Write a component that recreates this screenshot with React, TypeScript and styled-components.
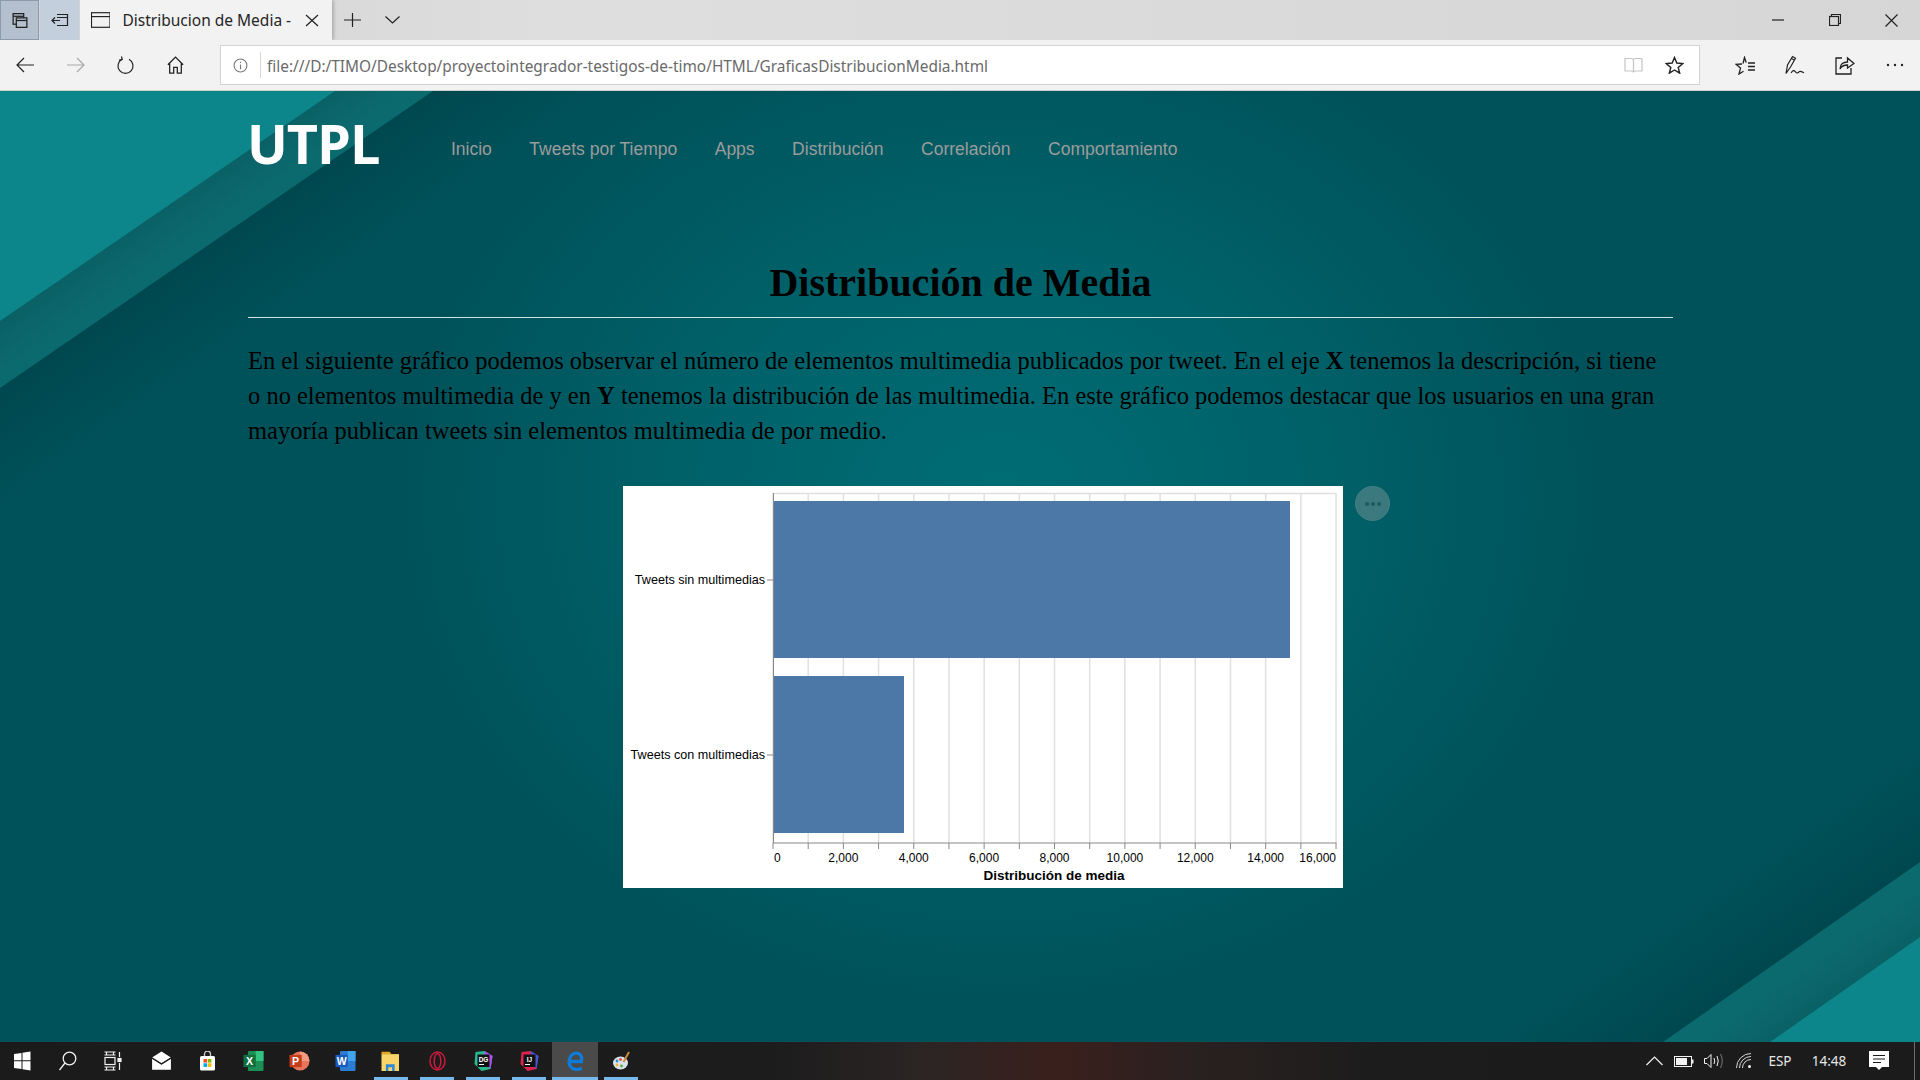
import React from 'react';
import styled, { createGlobalStyle } from 'styled-components';

const GlobalStyle = createGlobalStyle`
  html, body {
    margin: 0;
    padding: 0;
    height: 100%;
    overflow: hidden;
  }
  #root {
    height: 100%;
  }
`;

const Screen = styled.div`
  display: flex;
  flex-direction: column;
  height: 1080px;
  width: 1920px;
  font-family: "Noto Sans", sans-serif;
`;

/* browser chrome */
const TabBar = styled.div`
  display: flex;
  align-items: stretch;
  height: 40px;
  background: linear-gradient(90deg, #d4d4d4, #dedede 30%, #d6d6d6);
  flex: none;
`;

const TabAction = styled.div<{ $active?: boolean }>`
  width: 39px;
  margin-right: 1px;
  display: flex;
  align-items: center;
  justify-content: center;
  box-sizing: border-box;
  background: ${(p) => (p.$active ? '#b4c0ce' : '#c4cfdd')};
  border: 1px solid ${(p) => (p.$active ? '#8c9bab' : '#c4cfdd')};
`;

const Tab = styled.div`
  width: 252px;
  background: #f2f2f2;
  display: flex;
  align-items: center;
  padding-left: 11px;
  box-sizing: border-box;
  box-shadow: 2px 0 3px rgba(0, 0, 0, 0.2);
`;

const TabTitle = styled.span`
  margin-left: 12px;
  font-size: 15.5px;
  color: #262626;
  white-space: nowrap;
  flex: 1;
`;

const TabClose = styled.div`
  width: 42px;
  display: flex;
  justify-content: center;
`;

const TabExtra = styled.div`
  width: 40px;
  display: flex;
  align-items: center;
  justify-content: center;
`;

const Spacer = styled.div`
  flex: 1;
`;

const WindowButton = styled.div`
  width: 57px;
  display: flex;
  align-items: center;
  justify-content: center;
`;

const WindowButtons = styled.div`
  display: flex;
`;

const ToolBar = styled.div`
  display: flex;
  align-items: center;
  height: 51px;
  background: #f2f2f2;
  border-bottom: 1px solid #cfcfcf;
  box-sizing: border-box;
  flex: none;
`;

const NavButton = styled.div`
  width: 50px;
  display: flex;
  justify-content: center;
`;

const AddressBox = styled.div`
  margin-left: 20px;
  width: 1480px;
  height: 40px;
  background: #fff;
  border: 1px solid #d2d2d2;
  box-sizing: border-box;
  display: flex;
  align-items: center;
`;

const InfoSlot = styled.div`
  width: 39px;
  height: 26px;
  display: flex;
  align-items: center;
  justify-content: center;
  border-right: 1px solid #d6d6d6;
`;

const Url = styled.div`
  margin: 2px 0 0 6px;
  flex: 1;
  font-size: 15.4px;
  color: #6a6a6a;
  white-space: nowrap;
`;

const AddressAction = styled.div`
  width: 41px;
  display: flex;
  justify-content: center;
  &:last-child {
    margin-right: 4px;
  }
`;

const HubButtons = styled.div`
  display: flex;
  align-items: center;
  margin-left: 20px;
`;

const HubButton = styled.div`
  width: 50px;
  display: flex;
  align-items: center;
  justify-content: center;
`;

/* page */
const Page = styled.main`
  position: relative;
  flex: 1;
  overflow: hidden;
  background:
    radial-gradient(ellipse 600px 500px at 1000px 410px, #006d75 0%, #00626a 50%, #00525a 100%),
    #00525a;
`;

const BackgroundArt = styled.svg`
  position: absolute;
  inset: 0;
  width: 100%;
  height: 100%;
`;

const Container = styled.div`
  position: relative;
  margin-left: 248px;
  width: 1425px;
`;

const Header = styled.header`
  display: flex;
  align-items: center;
  height: 94px;
  padding-top: 10px;
`;

const Brand = styled.div`
  font-family: "Open Sans", sans-serif;
  font-weight: 700;
  font-size: 54px;
  letter-spacing: -1px;
  line-height: 94px;
  color: #fff;
  width: 204px;
  margin: -10px 0 0 -1px;
`;

const Nav = styled.nav`
  display: flex;
  gap: 37.5px;
  margin-top: 2px;
`;

const NavLink = styled.a`
  font-family: "Liberation Sans", sans-serif;
  font-size: 17.5px;
  color: #9c9c9c;
`;

const Title = styled.h1`
  font-family: "Liberation Serif", serif;
  font-weight: 700;
  font-size: 40px;
  line-height: 46px;
  margin: 65px 0 0;
  padding-bottom: 11px;
  text-align: center;
  color: #000;
  border-bottom: 1px solid #cfe3e3;
`;

const Lead = styled.p`
  font-family: "Liberation Serif", serif;
  font-size: 24.5px;
  line-height: 35px;
  margin: 25px 0 0;
  color: #000;
`;

const ChartRow = styled.div`
  display: flex;
  align-items: flex-start;
  margin: 38px 0 0 375px;
`;

const ChartCard = styled.div`
  width: 720px;
  height: 402px;
  background: #fff;
  flex: none;
`;

const MoreButton = styled.div`
  width: 35px;
  height: 35px;
  margin: 0 0 0 12px;
  border-radius: 50%;
  background: #3a797d;
  border: 1px solid #457f83;
  box-sizing: border-box;
  display: flex;
  align-items: center;
  justify-content: center;
  gap: 2px;
`;

const MoreDot = styled.span`
  width: 4px;
  height: 4px;
  border-radius: 50%;
  background: #1d5a5f;
`;

/* taskbar */
const TaskBar = styled.footer`
  height: 38px;
  flex: none;
  display: flex;
  align-items: stretch;
  background: linear-gradient(90deg, #1b1b1b 0, #1c1c1c 40%, #2b2524 48%, #3a1f1c 55%, #2a2120 62%, #1c1c1c 72%, #1b1b1b 100%);
`;

const TaskItem = styled.div<{ $open?: boolean; $active?: boolean }>`
  position: relative;
  width: 46px;
  display: flex;
  align-items: center;
  justify-content: center;
  background: ${(p) => (p.$active ? '#4a4a4a' : 'transparent')};
  & > svg {
    width: 21px;
    height: 20px;
  }
  &::after {
    content: '';
    display: ${(p) => (p.$open ? 'block' : 'none')};
    position: absolute;
    left: ${(p) => (p.$active ? '0' : '6px')};
    right: ${(p) => (p.$active ? '0' : '6px')};
    bottom: 0;
    height: 3px;
    background: #76b9ed;
  }
`;

const SystemItem = styled(TaskItem)`
  width: 45px;
`;

const FirstAppItem = styled(TaskItem)`
  margin-left: 3px;
`;

const Tray = styled.div`
  display: flex;
  align-items: center;
  color: #e6e6e6;
  font-size: 13.5px;
`;

const TrayIcon = styled.div<{ $w: number }>`
  width: ${(p) => p.$w}px;
  display: flex;
  justify-content: center;
`;

const TrayText = styled.span<{ $w: number }>`
  width: ${(p) => p.$w}px;
  text-align: center;
`;

const ShowDesktop = styled.div`
  width: 1px;
  align-self: stretch;
  margin: 0 5px 0 13px;
  background: #6c6c6c;
`;

const Ink = {
  fill: 'none',
  stroke: '#222',
  strokeWidth: 1.2,
};

const WHITE = { fill: 'none', stroke: '#f2f2f2', strokeWidth: 1.2 };

const grid = Array.from({ length: 17 }, (_, i) => 150 + i * 35.19);
const tickLabels = [0, 2, 4, 6, 8, 10, 12, 14, 16];

const Chart = () => (
  <svg width="720" height="402" viewBox="0 0 720 402" fontFamily="'Liberation Sans', sans-serif">
    {grid.map((x) => (
      <line key={x} x1={x} x2={x} y1="7" y2="357" stroke="#e0e0e0" strokeWidth="1.5" />
    ))}
    <line x1="150" x2="713" y1="7.5" y2="7.5" stroke="#e0e0e0" strokeWidth="1.5" />
    <rect x="150" y="15" width="517" height="157" fill="#4c78a8" />
    <rect x="150" y="190" width="131" height="157" fill="#4c78a8" />
    <line x1="150.5" x2="150.5" y1="7" y2="357" stroke="#888" />
    <line x1="150" x2="713.5" y1="357" y2="357" stroke="#888" strokeWidth="1" />
    {grid.map((x) => (
      <line key={x} x1={x} x2={x} y1="357" y2="363" stroke="#888" />
    ))}
    <line x1="144" x2="150" y1="94" y2="94" stroke="#888" />
    <line x1="144" x2="150" y1="269" y2="269" stroke="#888" />
    <text x="142" y="98" fontSize="12.6" textAnchor="end" fill="#000">Tweets sin multimedias</text>
    <text x="142" y="273" fontSize="12.6" textAnchor="end" fill="#000">Tweets con multimedias</text>
    {tickLabels.map((v) => {
      const x = 150 + v * 1000 * 0.03519;
      const anchor = v === 0 ? 'start' : v === 16 ? 'end' : 'middle';
      return (
        <text key={v} x={v === 0 ? 151 : x} y="376" fontSize="12" textAnchor={anchor} fill="#000">
          {v === 0 ? '0' : `${v},000`}
        </text>
      );
    })}
    <text x="431" y="394" fontSize="13.5" fontWeight="700" textAnchor="middle" fill="#000">Distribución de media</text>
  </svg>
);

const Art = () => (
  <BackgroundArt viewBox="0 0 1920 951" preserveAspectRatio="none">
    <defs>
      <linearGradient id="shadeTop" gradientUnits="userSpaceOnUse" x1="216" y1="149" x2="273" y2="231">
        <stop offset="0" stopColor="#003f46" stopOpacity="0.55" />
        <stop offset="1" stopColor="#003f46" stopOpacity="0" />
      </linearGradient>
      <linearGradient id="shadeBottom" gradientUnits="userSpaceOnUse" x1="1790" y1="862" x2="1733" y2="780">
        <stop offset="0" stopColor="#003f46" stopOpacity="0.55" />
        <stop offset="1" stopColor="#003f46" stopOpacity="0" />
      </linearGradient>
      <linearGradient id="innerTop" gradientUnits="userSpaceOnUse" x1="167" y1="115" x2="190" y2="148">
        <stop offset="0" stopColor="#095a5f" stopOpacity="0.6" />
        <stop offset="1" stopColor="#095a5f" stopOpacity="0" />
      </linearGradient>
      <linearGradient id="innerBottom" gradientUnits="userSpaceOnUse" x1="1845" y1="899" x2="1822" y2="866">
        <stop offset="0" stopColor="#095a5f" stopOpacity="0.6" />
        <stop offset="1" stopColor="#095a5f" stopOpacity="0" />
      </linearGradient>
    </defs>
    <polygon points="0,0 900,0 0,618" fill="url(#shadeTop)" />
    <polygon points="0,0 433,0 0,297" fill="#0b6a6e" />
    <polygon points="0,0 433,0 0,297" fill="url(#innerTop)" />
    <polygon points="0,0 335,0 0,230" fill="#0c858b" />
    <polygon points="1920,400 1920,951 1100,951" fill="url(#shadeBottom)" />
    <polygon points="1920,771 1920,951 1663,951" fill="#0b6a6e" />
    <polygon points="1920,771 1920,951 1663,951" fill="url(#innerBottom)" />
    <polygon points="1920,846 1920,951 1770,951" fill="#0c858b" />
  </BackgroundArt>
);

const WinLogo = () => (
  <svg viewBox="0 0 17 20">
    <path d="M0 3 7.500 2v7.300H0zM8.500 1.800 16.500 0.500v8.800h-8zM0 10.300h7.500V18L0 17zM8.500 10.300h8v9.200l-8-1.200z" fill="#fff" />
  </svg>
);

const AppTile = ({ letter, dark, light, mid }: { letter: string; dark: string; light: string; mid: string }) => (
  <svg viewBox="0 0 18 18">
    <rect x="4" y="0" width="14" height="18" rx="1" fill={mid} />
    <rect x="11" y="0" width="7" height="9" fill={light} />
    <rect x="0" y="3.5" width="11" height="11" fill={dark} />
    <text x="5.5" y="12.5" fontSize="9.5" fontWeight="700" textAnchor="middle" fill="#fff" fontFamily="'Liberation Sans', sans-serif">{letter}</text>
  </svg>
);

const JetTile = ({ letter, a, b }: { letter: string; a: string; b: string }) => (
  <svg viewBox="0 0 18 20">
    <polygon points="1,1 10,0 18,5 16,18 7,20 0,13" fill={a} />
    <polygon points="10,0 18,5 16,18 11,13" fill={b} />
    <rect x="3" y="3.5" width="12" height="12.5" fill="#111" />
    <text x="9" y="10.5" fontSize="6.5" fontWeight="700" textAnchor="middle" fill="#fff" fontFamily="'Liberation Sans', sans-serif">{letter}</text>
    <rect x="4.5" y="13" width="5" height="1" fill="#fff" />
  </svg>
);

const App: React.FC = () => (
  <Screen>
    <GlobalStyle />
    <TabBar>
      <TabAction $active>
        <svg width="20" height="19" viewBox="0 0 18 18" {...Ink}>
          <rect x="2.5" y="2.5" width="10" height="10" />
          <path d="M2.500 5h10" />
          <rect x="5.5" y="6.5" width="10" height="9" fill="#b4c0ce" />
          <path d="M5.500 9h10" />
        </svg>
      </TabAction>
      <TabAction>
        <svg width="20" height="18" viewBox="0 0 18 18" {...Ink}>
          <path d="M6 3.500h10.500v11H6M6 6.500h10.500" />
          <path d="M1 9.500h8M4 6.500l-3 3 3 3" />
        </svg>
      </TabAction>
      <Tab>
        <svg width="20" height="16" viewBox="0 0 20 16" {...Ink}>
          <rect x="0.5" y="0.5" width="19" height="15" />
          <path d="M0.500 4.500h19" />
        </svg>
        <TabTitle>Distribucion de Media -</TabTitle>
        <TabClose>
          <svg width="14" height="13" viewBox="0 0 14 13" {...Ink}>
            <path d="M1 1l12 11M13 1 1 12" />
          </svg>
        </TabClose>
      </Tab>
      <TabExtra>
        <svg width="17" height="14" viewBox="0 0 17 14" {...Ink}>
          <path d="M8.500 0v14M0 7h17" />
        </svg>
      </TabExtra>
      <TabExtra>
        <svg width="15" height="8" viewBox="0 0 15 8" {...Ink}>
          <path d="M0.500 0.500 7.500 7l7-6.500" />
        </svg>
      </TabExtra>
      <Spacer />
      <WindowButtons>
        <WindowButton>
          <svg width="12" height="2" viewBox="0 0 12 2" {...Ink}>
            <path d="M0 1h12" />
          </svg>
        </WindowButton>
        <WindowButton>
          <svg width="12" height="12" viewBox="0 0 12 12" {...Ink}>
            <rect x="0.5" y="2.5" width="9" height="9" />
            <path d="M2.500 2.500v-2h9v9h-2" />
          </svg>
        </WindowButton>
        <WindowButton>
          <svg width="13" height="13" viewBox="0 0 13 13" {...Ink}>
            <path d="M0.500 0.500l12 12M12.500 0.500l-12 12" />
          </svg>
        </WindowButton>
      </WindowButtons>
    </TabBar>

    <ToolBar>
      <NavButton>
        <svg width="19" height="16" viewBox="0 0 19 16" {...Ink}>
          <path d="M18 8H1M8 1 1 8l7 7" />
        </svg>
      </NavButton>
      <NavButton>
        <svg width="19" height="16" viewBox="0 0 19 16" fill="none" stroke="#a8a8a8" strokeWidth="1.2">
          <path d="M1 8h17M11 1l7 7-7 7" />
        </svg>
      </NavButton>
      <NavButton>
        <svg width="19" height="19" viewBox="0 0 17 19" {...Ink}>
          <path d="M5 3.200A7.500 7.500 0 1 0 12 3.200" />
          <path d="M4.500 0.500 5.200 3.500 2 4.200" />
        </svg>
      </NavButton>
      <NavButton>
        <svg width="19" height="18" viewBox="0 0 16 17" {...Ink}>
          <path d="M0.800 8.200 8 1l7.200 7.200M2.500 7v9.200h3.800v-5.500h3.400v5.500h3.800V7" />
        </svg>
      </NavButton>
      <AddressBox>
        <InfoSlot>
          <svg width="15" height="15" viewBox="0 0 14 14" fill="none" stroke="#777" strokeWidth="1">
            <circle cx="7" cy="7" r="6" />
            <path d="M7 6v4.500M7 3.500v1.200" />
          </svg>
        </InfoSlot>
        <Url>file:///D:/TIMO/Desktop/proyectointegrador-testigos-de-timo/HTML/GraficasDistribucionMedia.html</Url>
        <AddressAction>
          <svg width="19" height="18" viewBox="0 0 19 18" fill="none" stroke="#c4c4c4" strokeWidth="1.2">
            <path d="M1 2.500h6.500Q9.500 2.500 9.500 4.500V16.500Q9.500 15 7.500 15H1zM18 2.500h-6.500Q9.500 2.500 9.500 4.500M18 2.500V15h-6.500Q9.500 15 9.500 16.500" />
          </svg>
        </AddressAction>
        <AddressAction>
          <svg width="19" height="18" viewBox="0 0 19 18" fill="none" stroke="#222" strokeWidth="1.4">
            <path d="M9.500 1.500 11.800 7l6 .5-4.600 3.900 1.500 5.800-5.200-3.200-5.200 3.200 1.500-5.800L1.200 7.500l6-.5z" />
          </svg>
        </AddressAction>
      </AddressBox>
      <HubButtons>
        <HubButton>
          <svg width="20" height="19" viewBox="0 0 20 19" fill="none" stroke="#222" strokeWidth="1.3">
            <path d="M7 8 1 8.300l4.500 3.800L4 18l4.500-2.800M8 7.500 9.500 1.500 11.200 6.500M13 7h7M13 10.500h7M13 14h7" />
          </svg>
        </HubButton>
        <HubButton>
          <svg width="20" height="20" viewBox="0 0 20 20" fill="none" stroke="#222" strokeWidth="1.2">
            <path d="M1 18.500 2.500 10 7.500 1.500l3 1.700-5 8.800L1 18.500zM6.500 3.500l3 1.700" />
            <path d="M6 18c2-3 3-3 4.500-1.200s2.500 1.200 3.500 0 3 0 5 1" />
          </svg>
        </HubButton>
        <HubButton>
          <svg width="20" height="19" viewBox="0 0 20 19" fill="none" stroke="#222" strokeWidth="1.3">
            <path d="M7 2H1v16h15v-6" />
            <path d="M5 13C5 8 8.500 6 12.500 6V2L19 7.500 12.500 12V9C9 9 6.500 10 5 13z" />
          </svg>
        </HubButton>
        <HubButton>
          <svg width="18" height="4" viewBox="0 0 18 4" fill="#222">
            <circle cx="2" cy="2" r="1.200" />
            <circle cx="9" cy="2" r="1.200" />
            <circle cx="16" cy="2" r="1.200" />
          </svg>
        </HubButton>
      </HubButtons>
    </ToolBar>

    <Page>
      <Art />
      <Container>
        <Header>
          <Brand>UTPL</Brand>
          <Nav>
            <NavLink>Inicio</NavLink>
            <NavLink>Tweets por Tiempo</NavLink>
            <NavLink>Apps</NavLink>
            <NavLink>Distribución</NavLink>
            <NavLink>Correlación</NavLink>
            <NavLink>Comportamiento</NavLink>
          </Nav>
        </Header>
        <Title>Distribución de Media</Title>
        <Lead>
          En el siguiente gráfico podemos observar el número de elementos multimedia publicados por tweet. En el eje <b>X</b> tenemos la descripción, si tiene o no elementos multimedia de y en <b>Y</b> tenemos la distribución de las multimedia. En este gráfico podemos destacar que los usuarios en una gran mayoría publican tweets sin elementos multimedia de por medio.
        </Lead>
        <ChartRow>
          <ChartCard>
            <Chart />
          </ChartCard>
          <MoreButton>
            <MoreDot />
            <MoreDot />
            <MoreDot />
          </MoreButton>
        </ChartRow>
      </Container>
    </Page>

    <TaskBar>
      <SystemItem><WinLogo /></SystemItem>
      <SystemItem>
        <svg viewBox="0 0 18 20" fill="none" stroke="#f2f2f2" strokeWidth="1.3">
          <circle cx="11" cy="7.500" r="6.300" />
          <path d="M6.500 12 1 19" />
        </svg>
      </SystemItem>
      <SystemItem>
        <svg viewBox="0 0 18 20" {...WHITE}>
          <path d="M1 1h11M1 4h11M1 16h11M1 19h11M3 1v3M10 1v3M3 16v3M10 16v3" />
          <rect x="1.500" y="6.500" width="10" height="7" />
          <path d="M16 1v5M16 12v7" />
          <rect x="14.500" y="7.500" width="3" height="3" fill="#f2f2f2" />
        </svg>
      </SystemItem>
      <FirstAppItem>
        <svg viewBox="0 0 17 17">
          <path d="M0.500 5.500 8.500 0.500l8 5-8 5z" fill="#fff" />
          <path d="M0.500 6.500 8.500 11.500l8-5V16H0.500z" fill="#fff" />
          <path d="M0.500 6 8.500 11l8-5" fill="none" stroke="#1b1b1b" strokeWidth="1" />
        </svg>
      </FirstAppItem>
      <TaskItem>
        <svg viewBox="0 0 16 20">
          <path d="M5 5V3a3 3 0 0 1 6 0v2" fill="none" stroke="#ccc" strokeWidth="1.300" />
          <rect x="0.500" y="5" width="15" height="14.500" rx="1.500" fill="#fff" />
          <rect x="4" y="8" width="3.600" height="3.600" fill="#f25022" />
          <rect x="8.300" y="8" width="3.600" height="3.600" fill="#7fba00" />
          <rect x="4" y="12.300" width="3.600" height="3.600" fill="#00a4ef" />
          <rect x="8.300" y="12.300" width="3.600" height="3.600" fill="#ffb900" />
        </svg>
      </TaskItem>
      <TaskItem><AppTile letter="X" dark="#10703f" mid="#1d8f55" light="#33c481" /></TaskItem>
      <TaskItem>
        <svg viewBox="0 0 18 18">
          <circle cx="9.500" cy="9" r="8.500" fill="#e8765a" />
          <path d="M9.500 0.500A8.500 8.500 0 0 1 18 9H9.500z" fill="#f29b80" />
          <rect x="0" y="3.500" width="11" height="11" fill="#c43e1c" />
          <text x="5.500" y="12.500" fontSize="9.500" fontWeight="700" textAnchor="middle" fill="#fff" fontFamily="'Liberation Sans', sans-serif">P</text>
        </svg>
      </TaskItem>
      <TaskItem><AppTile letter="W" dark="#185abd" mid="#2b7cd3" light="#41a5ee" /></TaskItem>
      <TaskItem $open>
        <svg viewBox="0 0 16 16">
          <path d="M0 0.500h6.500l1.500 2H0z" fill="#e8a723" />
          <rect x="0" y="2.500" width="14" height="13.500" fill="#f8d568" />
          <path d="M3.500 16v-5.500h7V16h-2v-3h-3v3z" fill="#2d88d8" />
        </svg>
      </TaskItem>
      <TaskItem $open>
        <svg viewBox="0 0 17 20" fill="none" stroke="#d11a3d" strokeWidth="1.500">
          <ellipse cx="8.500" cy="10" rx="7.500" ry="9" />
          <ellipse cx="8.500" cy="10" rx="3.300" ry="7.500" />
        </svg>
      </TaskItem>
      <TaskItem $open><JetTile letter="DG" a="#29b98f" b="#b74af7" /></TaskItem>
      <TaskItem $open><JetTile letter="IJ" a="#e0234e" b="#3b5bdb" /></TaskItem>
      <TaskItem $open $active>
        <svg viewBox="0 0 17 19" fill="none" stroke="#0f7bd8" strokeWidth="3.200">
          <path d="M15.500 10H2.500C3 4.500 6 2 9 2c3.500 0 5.500 2.500 5.500 6.500M2.500 10C2.500 15 6 17.500 9.500 17.500c2 0 3.800-.5 5-1.300" />
        </svg>
      </TaskItem>
      <TaskItem $open>
        <svg viewBox="0 0 18 20">
          <ellipse cx="8" cy="12" rx="7.500" ry="6.500" fill="#dbe3ea" />
          <circle cx="4.500" cy="10" r="1.400" fill="#2d88d8" />
          <circle cx="8" cy="8.500" r="1.400" fill="#e04b3a" />
          <circle cx="4.500" cy="14" r="1.400" fill="#f0b429" />
          <circle cx="9" cy="15" r="1.400" fill="#5aaa46" />
          <path d="M11 11 16.500 1" stroke="#c98b3c" strokeWidth="2" />
        </svg>
      </TaskItem>
      <Spacer />
      <Tray>
        <TrayIcon $w={30}>
          <svg width="17" height="10" viewBox="0 0 17 10" {...WHITE}>
            <path d="M0.500 9 8.500 1l8 8" />
          </svg>
        </TrayIcon>
        <TrayIcon $w={30}>
          <svg width="20" height="11" viewBox="0 0 20 11">
            <rect x="0.500" y="0.500" width="17" height="10" fill="none" stroke="#f2f2f2" />
            <rect x="2" y="2" width="11" height="7" fill="#f2f2f2" />
            <rect x="18" y="3.500" width="1.500" height="4" fill="#f2f2f2" />
          </svg>
        </TrayIcon>
        <TrayIcon $w={29}>
          <svg width="20" height="16" viewBox="0 0 20 16" fill="none" stroke="#f2f2f2" strokeWidth="1">
            <path d="M0.500 5.500h2.500L7 1.500v13L3 10.500H0.500z" />
            <path d="M10 5q1.500 3 0 6M13 3q2.500 5 0 10" />
            <path d="M16.500 1q3.500 7 0 14" stroke="#777" />
          </svg>
        </TrayIcon>
        <TrayIcon $w={31}>
          <svg width="16" height="16" viewBox="0 0 16 16" fill="none" stroke="#d8d8d8" strokeWidth="1">
            <path d="M0.500 15A14.500 14.500 0 0 1 15 0.500M3.500 15A11.500 11.500 0 0 1 15 3.500M6.500 15A8.500 8.500 0 0 1 15 6.500" />
            <circle cx="13.500" cy="13.500" r="1.500" fill="#f2f2f2" stroke="none" />
          </svg>
        </TrayIcon>
        <TrayText $w={42}>ESP</TrayText>
        <TrayText $w={56}>14:48</TrayText>
        <TrayIcon $w={44}>
          <svg width="20" height="20" viewBox="0 0 20 20">
            <path d="M0 0h20v16h-7l-3 3-3-3H0z" fill="#fff" />
            <path d="M4 4.500h12M4 8h12M4 11.500h8" stroke="#1b1b1b" strokeWidth="1.200" />
          </svg>
        </TrayIcon>
        <ShowDesktop />
      </Tray>
    </TaskBar>
  </Screen>
);

export default App;
